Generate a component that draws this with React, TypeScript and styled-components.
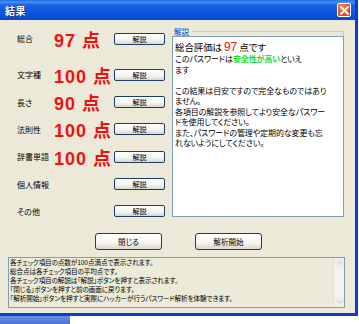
import React from "react";
import styled, { createGlobalStyle, css } from "styled-components";

const GlobalStyle = createGlobalStyle`
  html, body {
    margin: 0;
    padding: 0;
    background: #ffffff;
  }
  body {
    width: 359px;
    height: 324px;
    overflow: hidden;
    font-family: "Noto Sans CJK JP", "Liberation Sans", sans-serif;
    font-feature-settings: "palt";
  }
`;

type Row = { label: string; score?: number };

const rows: Row[] = [
  { label: "総合", score: 97 },
  { label: "文字種", score: 100 },
  { label: "長さ", score: 90 },
  { label: "法則性", score: 100 },
  { label: "辞書単語", score: 100 },
  { label: "個人情報" },
  { label: "その他" },
];

const helpLines = [
  "各チェック項目の点数が100点満点で表示されます。",
  "総合点は各チェック項目の平均点です。",
  "各チェック項目の解説は「解説」ボタンを押すと表示されます。",
  "「閉じる」ボタンを押すと前の画面に戻ります。",
  "「解析開始」ボタンを押すと実際にハッカーが行うパスワード解析を体験できます。",
];

function App() {
  return (
    <>
      <GlobalStyle />
      <Screen>
        <Window>
          <TitleBar>
            <Title>結果</Title>
            <CloseButton>
              <svg width="9" height="9" viewBox="0 0 9 9">
                <path d="M1 1 L8 8 M8 1 L1 8" stroke="#fff" strokeWidth="1.8" strokeLinecap="square" />
              </svg>
            </CloseButton>
          </TitleBar>
          <Body>
            <Main>
              <ScoreList>
                {rows.map((r, i) => (
                  <ScoreRow key={r.label} first={i === 0}>
                    <Label>{r.label}</Label>
                    <Score>{r.score !== undefined ? `${r.score} 点` : ""}</Score>
                    <SmallButton>解説</SmallButton>
                  </ScoreRow>
                ))}
              </ScoreList>
              <Group>
                <GroupHead>
                  <GroupLabel>解説</GroupLabel>
                  <GroupLine />
                </GroupHead>
                <Explain>
                  <FirstLine>
                    総合評価は <Red>97</Red> 点です
                  </FirstLine>
                  <Line>
                    このパスワードは<Green>安全性が高い</Green>といえ
                  </Line>
                  <Line>ます</Line>
                  <Line>&nbsp;</Line>
                  <Line>この結果は目安ですので完全なものではあり</Line>
                  <Line>ません。</Line>
                  <Line>各項目の解説を参照してより安全なパスワー</Line>
                  <Line>ドを使用してください。</Line>
                  <Line>また、パスワードの管理や定期的な変更も忘</Line>
                  <Line>れないようにしてください。</Line>
                </Explain>
              </Group>
            </Main>
            <ButtonRow>
              <BigButton>閉じる</BigButton>
              <BigButton>解析開始</BigButton>
            </ButtonRow>
            <HelpBox>
              <HelpText>
                {helpLines.map((l) => (
                  <HelpLine key={l}>{l}</HelpLine>
                ))}
              </HelpText>
              <ScrollBar>
                <ScrollArrow>
                  <svg width="7" height="4" viewBox="0 0 7 4">
                    <path d="M0.5 3.5 L3.5 0.5 L6.5 3.5" stroke="#c3c7cf" fill="none" />
                  </svg>
                </ScrollArrow>
                <ScrollArrow>
                  <svg width="7" height="4" viewBox="0 0 7 4">
                    <path d="M0.5 0.5 L3.5 3.5 L6.5 0.5" stroke="#c3c7cf" fill="none" />
                  </svg>
                </ScrollArrow>
              </ScrollBar>
            </HelpBox>
          </Body>
        </Window>
        <Taskbar>
          <TaskButton />
        </Taskbar>
      </Screen>
    </>
  );
}

export default App;

const Screen = styled.div`
  width: 359px;
  height: 324px;
  display: flex;
  flex-direction: column;
`;

const Window = styled.div`
  width: 355px;
  height: 313px;
  background: #ece9d8;
  border-right: 3px solid #0b3fc7;
  border-bottom: 3px solid #0b3fc7;
  display: flex;
  flex-direction: column;
`;

const TitleBar = styled.div`
  height: 20px;
  flex: none;
  display: flex;
  align-items: center;
  justify-content: space-between;
  padding: 0 4px 0 5px;
  background: linear-gradient(
    to bottom,
    #1f6ae6 0%,
    #4a90f0 10%,
    #1c62e4 25%,
    #0d57e0 60%,
    #0a4fd4 90%,
    #0a46c0 100%
  );
`;

const Title = styled.div`
  color: #ffffff;
  font-size: 10px;
  font-weight: bold;
  letter-spacing: 0.5px;
  text-shadow: 1px 1px 0 #0a2a80;
`;

const CloseButton = styled.div`
  width: 12px;
  height: 12px;
  border: 1px solid #ffffff;
  border-radius: 2px;
  background: radial-gradient(circle at 35% 30%, #f08a6a 0%, #e05a34 50%, #c8401c 100%);
  display: flex;
  align-items: center;
  justify-content: center;
`;

const Body = styled.div`
  flex: 1;
  display: flex;
  flex-direction: column;
`;

const Main = styled.div`
  display: flex;
  height: 205px;
`;

const ScoreList = styled.div`
  width: 172px;
  padding: 5px 0 0 17px;
  box-sizing: border-box;
  display: flex;
  flex-direction: column;
`;

const ScoreRow = styled.div<{ first?: boolean }>`
  height: 28px;
  display: flex;
  align-items: center;
  ${(p) =>
    p.first &&
    css`
      margin-bottom: 9px;
    `}
`;

const Label = styled.div`
  width: 37px;
  font-size: 8px;
  color: #000000;
  white-space: nowrap;
`;

const Score = styled.div`
  width: 60px;
  font-family: "Liberation Sans", "Noto Sans CJK JP", sans-serif;
  font-size: 18px;
  font-weight: bold;
  letter-spacing: 1px;
  color: #ee1111;
  white-space: nowrap;
`;

const SmallButton = styled.div`
  width: 51px;
  height: 12px;
  box-sizing: border-box;
  border: 1px solid #1c3c6c;
  border-radius: 2px;
  background: linear-gradient(to bottom, #ffffff 0%, #f4f4f0 60%, #d8d6cc 100%);
  font-size: 7px;
  color: #000000;
  display: flex;
  align-items: center;
  justify-content: center;
`;

const Group = styled.div`
  flex: 1;
  display: flex;
  flex-direction: column;
  padding-top: 7px;
  padding-right: 11px;
`;

const GroupHead = styled.div`
  display: flex;
  align-items: center;
  height: 8px;
`;

const GroupLabel = styled.div`
  font-size: 7.5px;
  color: #0046d5;
  padding: 0 3px 0 2px;
`;

const GroupLine = styled.div`
  flex: 1;
  margin-top: 6px;
  border-top: 1px solid #cfcbbb;
  border-right: 1px solid #cfcbbb;
  height: 6px;
`;

const Explain = styled.div`
  margin-top: 1px;
  height: 181px;
  box-sizing: border-box;
  background: #ffffff;
  border: 1px solid #7f9db9;
  padding: 3px 0 0 2px;
  font-size: 8px;
  letter-spacing: -0.1px;
  color: #000000;
  white-space: nowrap;
  overflow: hidden;
`;

const FirstLine = styled.div`
  height: 14px;
  line-height: 14px;
  font-size: 9.5px;
`;

const Line = styled.div`
  height: 10.5px;
  line-height: 10.5px;
`;

const Red = styled.span`
  font-family: "Liberation Sans", sans-serif;
  font-size: 12px;
  color: #ee1111;
`;

const Green = styled.span`
  color: #22dd22;
  font-weight: bold;
`;

const ButtonRow = styled.div`
  display: flex;
  justify-content: center;
  gap: 33px;
  padding: 8px 0 0 2px;
  height: 17px;
`;

const BigButton = styled.div`
  width: 67px;
  height: 17px;
  box-sizing: border-box;
  border: 1px solid #1c3c6c;
  border-radius: 3px;
  background: linear-gradient(to bottom, #ffffff 0%, #f4f4f0 60%, #d8d6cc 100%);
  font-size: 7.5px;
  color: #000000;
  display: flex;
  align-items: center;
  justify-content: center;
`;

const HelpBox = styled.div`
  margin: 7px 10px 0 8px;
  height: 51px;
  box-sizing: border-box;
  border: 1px solid #7f9db9;
  background: #ecead8;
  display: flex;
`;

const HelpText = styled.div`
  flex: 1;
  padding: 0 0 0 1px;
  overflow: hidden;
`;

const HelpLine = styled.div`
  font-size: 6.6px;
  letter-spacing: -0.1px;
  line-height: 9px;
  height: 9px;
  color: #000000;
  white-space: nowrap;
`;

const ScrollBar = styled.div`
  width: 10px;
  display: flex;
  flex-direction: column;
  justify-content: space-between;
  background: #f4f3ee;
  border-left: 1px solid #e2e0d6;
`;

const ScrollArrow = styled.div`
  height: 10px;
  display: flex;
  align-items: center;
  justify-content: center;
  background: #f0eee6;
`;

const Taskbar = styled.div`
  flex: 1;
  display: flex;
  background: #ffffff;
`;

const TaskButton = styled.div`
  width: 70px;
  background: linear-gradient(to bottom, #6a8ee0, #4b72d4);
`;
